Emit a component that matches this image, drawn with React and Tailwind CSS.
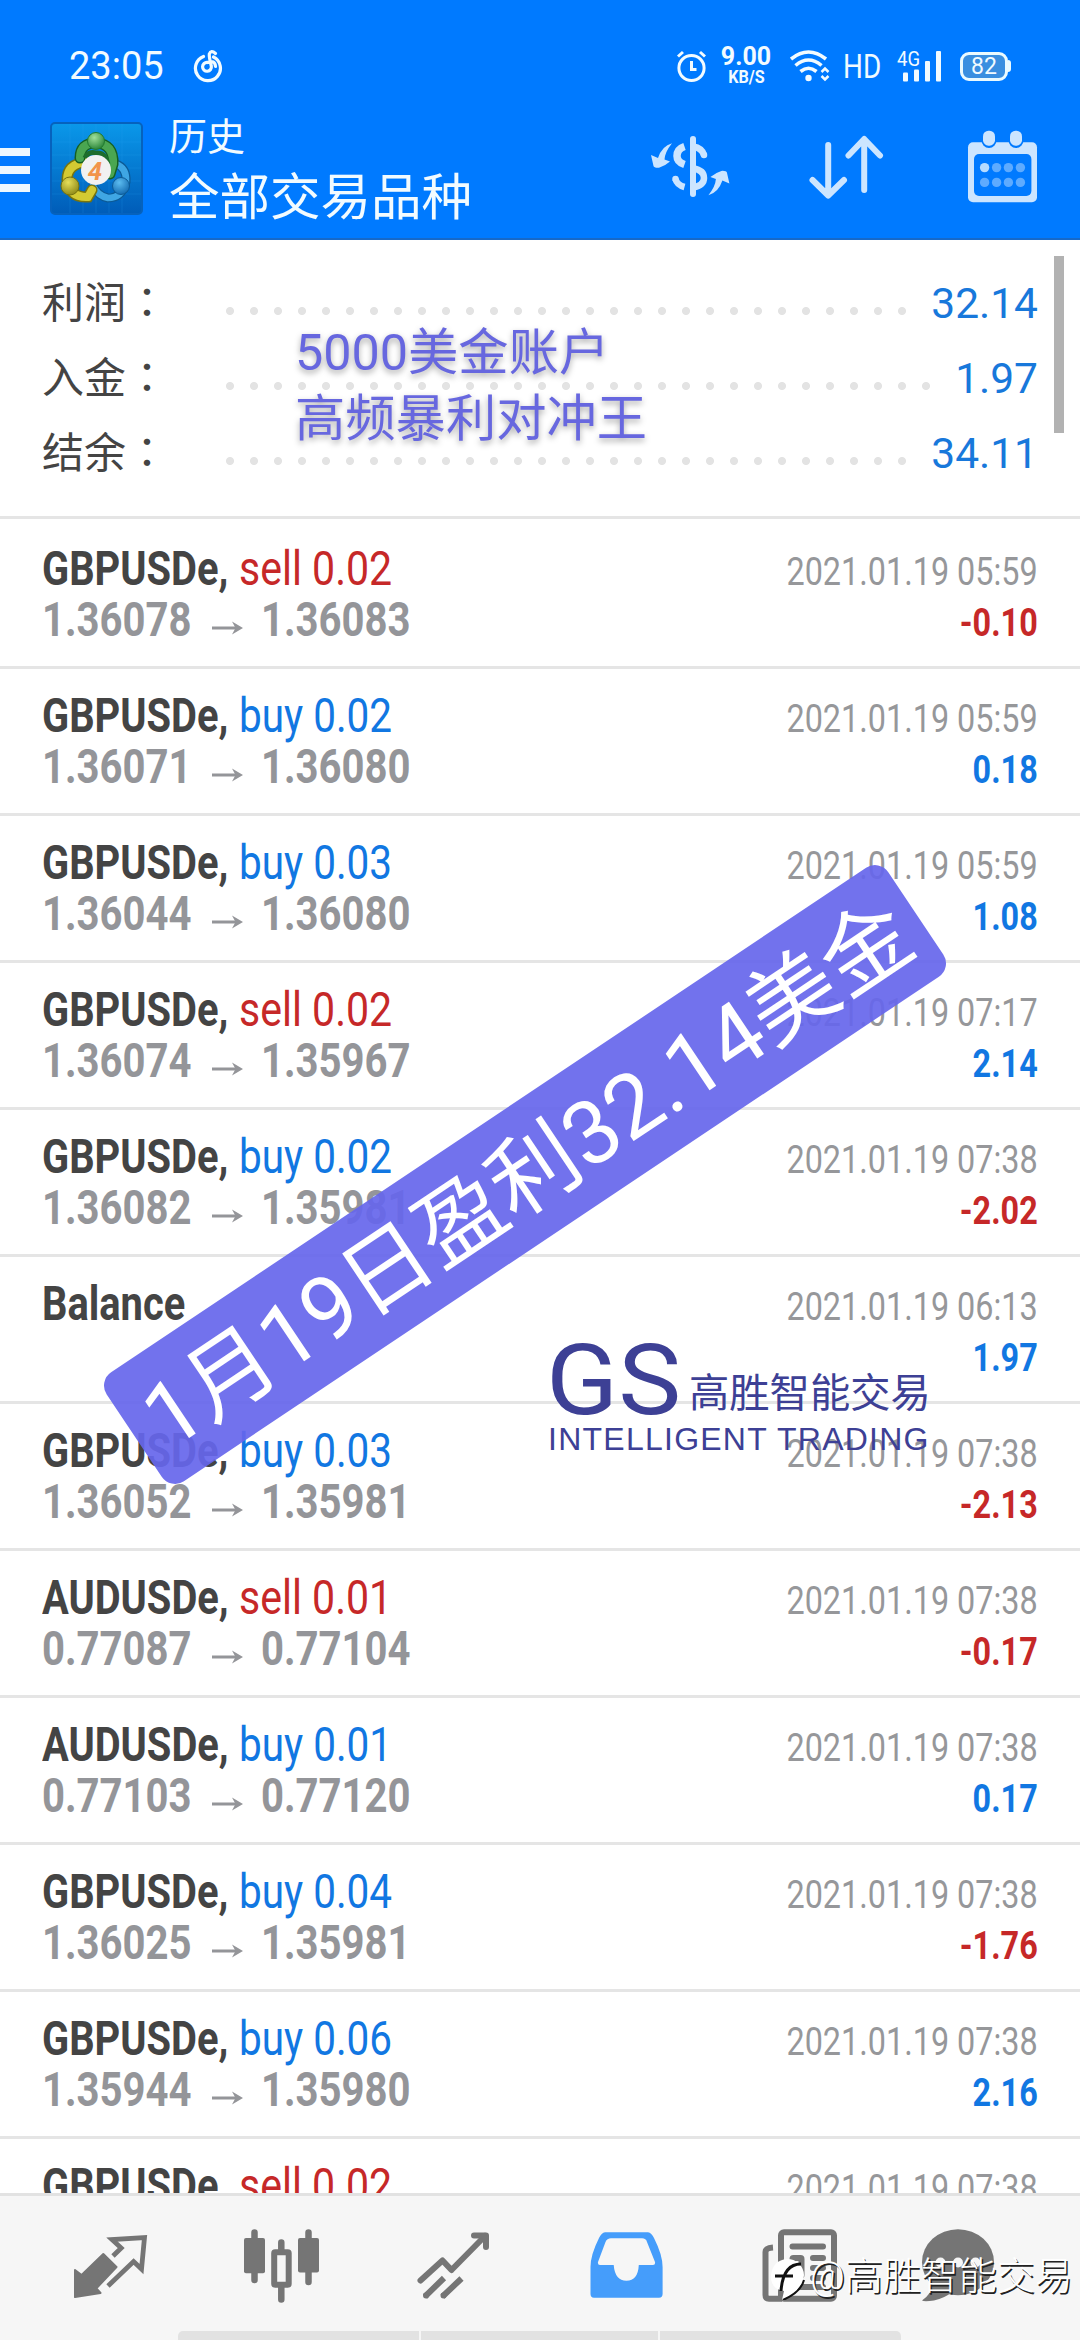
import React from 'react';

const deals = [
  { symbol: 'GBPUSDe', side: 'sell', volume: '0.02', open: '1.36078', close: '1.36083', time: '2021.01.19 05:59', profit: '-0.10' },
  { symbol: 'GBPUSDe', side: 'buy', volume: '0.02', open: '1.36071', close: '1.36080', time: '2021.01.19 05:59', profit: '0.18' },
  { symbol: 'GBPUSDe', side: 'buy', volume: '0.03', open: '1.36044', close: '1.36080', time: '2021.01.19 05:59', profit: '1.08' },
  { symbol: 'GBPUSDe', side: 'sell', volume: '0.02', open: '1.36074', close: '1.35967', time: '2021.01.19 07:17', profit: '2.14' },
  { symbol: 'GBPUSDe', side: 'buy', volume: '0.02', open: '1.36082', close: '1.35981', time: '2021.01.19 07:38', profit: '-2.02' },
  { symbol: 'Balance', time: '2021.01.19 06:13', profit: '1.97' },
  { symbol: 'GBPUSDe', side: 'buy', volume: '0.03', open: '1.36052', close: '1.35981', time: '2021.01.19 07:38', profit: '-2.13' },
  { symbol: 'AUDUSDe', side: 'sell', volume: '0.01', open: '0.77087', close: '0.77104', time: '2021.01.19 07:38', profit: '-0.17' },
  { symbol: 'AUDUSDe', side: 'buy', volume: '0.01', open: '0.77103', close: '0.77120', time: '2021.01.19 07:38', profit: '0.17' },
  { symbol: 'GBPUSDe', side: 'buy', volume: '0.04', open: '1.36025', close: '1.35981', time: '2021.01.19 07:38', profit: '-1.76' },
  { symbol: 'GBPUSDe', side: 'buy', volume: '0.06', open: '1.35944', close: '1.35980', time: '2021.01.19 07:38', profit: '2.16' },
  { symbol: 'GBPUSDe', side: 'sell', volume: '0.02', time: '2021.01.19 07:38' },
];

const summary = [
  { label: '利润', value: '32.14', dots: 'w-[696px]' },
  { label: '入金', value: '1.97', dots: 'w-[720px]' },
  { label: '结余', value: '34.11', dots: 'w-[696px]' },
];

const StatusBar = () => (
  <div className="flex h-[104px] items-center pt-[28px] text-[#f2fbff]">
    <span className="ml-[69px] w-[124px] text-[38px] leading-none">23:05</span>
    <svg width="30" height="34" viewBox="0 0 30 34" fill="none" stroke="currentColor" strokeWidth="3.200" strokeLinecap="round">
      <path d="M10.500 7.500 A12.500 12.500 0 1 0 20.500 8" />
      <path d="M22.500 4.500 Q18 0.500 16.300 5 Q16 8 18.300 17 A4.400 4.400 0 1 1 14.500 13.500 Q22 10.500 22.500 17.500" />
    </svg>
    <svg className="ml-[453px]" width="31" height="34" viewBox="0 0 31 34" fill="none" stroke="currentColor" strokeWidth="3">
      <circle cx="15.500" cy="19" r="12.600" />
      <path d="M15.500 12 V20.500 H20.500 M2 7.500 L7 3 M29 7.500 L24 3" />
    </svg>
    <div className="ml-[13px] flex w-[52px] flex-col items-center font-bold leading-none">
      <span className="text-[25px] leading-[21px]">9.00</span>
      <span className="origin-center scale-x-[0.85] text-[19px] leading-[20px]">KB/S</span>
    </div>
    <svg className="ml-[18px]" width="40" height="32" viewBox="0 0 40 32" fill="none" stroke="currentColor" strokeWidth="3.600">
      <path d="M1 9 Q18.500 -5 36 9 M5.500 15.500 Q18.500 4.500 31.500 15.500 M10.500 21.500 Q18.500 15 26.500 21.500" />
      <circle cx="18.500" cy="28" r="3.200" fill="currentColor" stroke="none" />
      <path d="M31.500 22 L35 18.500 L38.500 22 M31.500 26 L35 29.500 L38.500 26" strokeWidth="2.500" />
    </svg>
    <span className="ml-[13px] w-[38px] origin-left scale-x-[0.82] text-[34px] leading-none">HD</span>
    <svg className="ml-[16px]" width="45" height="32" viewBox="0 0 45 32" fill="currentColor">
      <text x="0" y="15.500" fontSize="20.500" textLength="23" lengthAdjust="spacingAndGlyphs">4G</text>
      <rect x="6" y="22.500" width="5" height="9" rx="1" />
      <rect x="17" y="19.500" width="5" height="12" rx="1" />
      <rect x="28" y="11" width="5" height="20.500" rx="1" />
      <rect x="39" y="1" width="5" height="30.500" rx="1" />
    </svg>
    <div className="ml-[18px] flex h-[29px] w-[48px] items-center justify-center rounded-[9px] border-[3px] border-[#eafaff] bg-[#3a8fe0] text-[23px] leading-none">
      82
    </div>
    <div className="h-[12px] w-[3px] rounded-r bg-[#eafaff]" />
  </div>
);

const AppLogo = () => (
  <svg className="ml-[20px] mt-[18px]" width="93" height="93" viewBox="0 0 93 93">
    <defs>
      <linearGradient id="tile" x1="0" y1="0" x2="0" y2="1">
        <stop offset="0" stopColor="#0a98ea" />
        <stop offset="1" stopColor="#005cb8" />
      </linearGradient>
      <radialGradient id="green" cx="0.4" cy="0.3" r="0.8">
        <stop offset="0" stopColor="#9fe09a" />
        <stop offset="1" stopColor="#1c7a2c" />
      </radialGradient>
      <radialGradient id="yellow" cx="0.4" cy="0.3" r="0.8">
        <stop offset="0" stopColor="#e6df5a" />
        <stop offset="1" stopColor="#858010" />
      </radialGradient>
      <radialGradient id="sky" cx="0.4" cy="0.3" r="0.8">
        <stop offset="0" stopColor="#5cbcf0" />
        <stop offset="1" stopColor="#0b62aa" />
      </radialGradient>
    </defs>
    <rect x="1" y="1" width="91" height="91" rx="4" fill="url(#tile)" stroke="#0662bd" strokeWidth="2" />
    <path d="M20 2V91M33 2V91M46 2V91M59 2V91M72 2V91M2 20H91M2 33H91M2 46H91M2 59H91M2 72H91" stroke="#2aa2ee" strokeOpacity="0.200" />
    {/* three figures round the badge */}
    <path d="M66 42 Q77 46 76 60 Q72 76 58 76 Q48 74 43 64" fill="none" stroke="#0c5a96" strokeWidth="9" strokeLinecap="round" />
    <path d="M66 42 Q77 46 76 60 Q72 76 58 76 Q48 74 43 64" fill="none" stroke="#3fa6e4" strokeWidth="6.500" strokeLinecap="round" />
    <path d="M36 40 Q17 42 17 58 Q20 76 38 75 L42 68" fill="none" stroke="#78740e" strokeWidth="11" strokeLinecap="round" />
    <path d="M36 40 Q17 42 17 58 Q20 76 38 75 L42 68" fill="none" stroke="#d3ca32" strokeWidth="8" strokeLinecap="round" />
    <path d="M30 36 Q30 21 46 21 Q64 22 63 42 L60 52" fill="none" stroke="#155f22" strokeWidth="11" strokeLinecap="round" />
    <path d="M30 36 Q30 21 46 21 Q64 22 63 42 L60 52" fill="none" stroke="#4aa651" strokeWidth="8" strokeLinecap="round" />
    <path d="M35 36 Q38 29 46 31 Q55 30 58 42" fill="none" stroke="#1d6d2c" strokeWidth="5" />
    <circle cx="46" cy="19" r="8.500" fill="url(#green)" stroke="#1f7a30" />
    <circle cx="20" cy="64" r="9" fill="url(#yellow)" stroke="#77730f" />
    <circle cx="71" cy="64" r="8.500" fill="url(#sky)" stroke="#0c5a96" />
    <circle cx="46" cy="48" r="15" fill="#f1f1f1" />
    <text x="45" y="57.500" textAnchor="middle" fontSize="26" fontWeight="700" fontStyle="italic" fill="#f2944a">4</text>
  </svg>
);

const ExchangeIcon = () => (
  <svg className="ml-auto mt-[31px]" width="80" height="64" viewBox="0 0 80 64" fill="none" stroke="currentColor" strokeWidth="6.500">
    <path d="M43 4 V59" strokeLinecap="round" strokeWidth="6" />
    <path d="M34.500 11.500 Q27 14 27 21 Q27 27 34.500 29.500" strokeWidth="7.500" />
    <path d="M25.500 44 Q27 50 34.500 52" />
    <path d="M25.500 44 V44.100 M54 20 V20.100" strokeLinecap="round" />
    <path d="M43 11.500 Q52 13 54 20" />
    <path d="M43 33.500 Q54 35 54 43 Q54 50.500 43 52.500" />
    <g fill="currentColor" stroke="none">
      <path id="swap" d="M1 20 L8 23 Q12 11 22 8.300 Q15 17 14.500 24.500 L20 26.500 Q15 31 9 32.700 Q4 33 3.500 31 Z" />
      <use href="#swap" transform="rotate(180 40.200 34.300)" />
    </g>
  </svg>
);

const SortIcon = () => (
  <svg className="ml-[78px] mt-[30px]" width="76" height="67" viewBox="0 0 76 67" fill="none" stroke="currentColor" strokeWidth="6" strokeLinecap="round" strokeLinejoin="round">
    <path d="M20.200 11 V61 M4.500 46 L20.200 61.500 L36 46" />
    <path d="M56.200 56 V6 M40.500 21.500 L56.200 5 L72 21.500" />
  </svg>
);

const CalendarIcon = () => (
  <svg className="ml-[83px] mr-[41px] mt-[26px]" width="72" height="73" viewBox="0 0 72 73">
    <rect x="1" y="12.300" width="69" height="60" rx="5" fill="currentColor" />
    <rect x="7" y="24" width="57.400" height="42" rx="5" fill="#007aff" />
    <rect x="14.500" y="-1" width="15" height="19" rx="7.500" fill="#007aff" />
    <rect x="41.500" y="-1" width="15" height="19" rx="7.500" fill="#007aff" />
    <rect x="16" y="0.700" width="12" height="15" rx="5.500" fill="currentColor" />
    <rect x="43" y="0.700" width="12" height="15" rx="5.500" fill="currentColor" />
    <circle cx="17.600" cy="37.600" r="4.700" fill="#b5dbff" />
    {[29.6, 41.4, 53.4].map((x) => (
      <circle key={x} cx={x} cy="37.600" r="4.700" fill="#5eabff" />
    ))}
    {[17.6, 29.6, 41.4, 53.4].map((x) => (
      <circle key={x} cx={x} cy="52.400" r="4.700" fill="#5eabff" />
    ))}
  </svg>
);

const Header = () => (
  <header className="h-[240px] border-b-2 border-[#1769c8] bg-[#007aff]">
    <StatusBar />
    <div className="flex items-start text-[#cce5ff]">
      <div className="mt-[44px] flex w-[30px] flex-col gap-[10px]">
        <div className="h-[8px] bg-[#ecf8ff]" />
        <div className="h-[8px] bg-[#ecf8ff]" />
        <div className="h-[8px] bg-[#ecf8ff]" />
      </div>
      <AppLogo />
      <div className="ml-[26px] mt-[9px] whitespace-nowrap text-[#f2fbff]">
        <div className="text-[38px] leading-[48px]">历史</div>
        <div className="mt-[7px] text-[50.500px] leading-[60px]">全部交易品种</div>
      </div>
      <ExchangeIcon />
      <SortIcon />
      <CalendarIcon />
    </div>
  </header>
);

const Summary = () => (
  <section className="relative h-[279px] border-b-[3px] border-[#e5e5e5] pt-[26px]">
    {summary.map((item) => (
      <div key={item.label} className="flex h-[75px] items-center pl-[42px] pr-[42px]">
        <span className="mb-[3px] w-[176px] text-[42px] leading-none text-[#444]">
          {item.label}
          <span className="font-['Noto_Sans_CJK_TC']">：</span>
        </span>
        <span className={`${item.dots} mt-[15px] h-[10px] bg-[radial-gradient(circle,#e3e3e3_3.6px,transparent_4.4px)] bg-[length:24px_10px]`} />
        <span className="ml-auto mt-[2px] text-[42.500px] leading-none text-[#1878db]">{item.value}</span>
      </div>
    ))}
    <div className="absolute right-[16px] top-[16px] h-[177px] w-[10px] bg-[#b2b2b2]" />
    <div className="absolute left-[295px] top-[80px] text-[50.300px] leading-[66px] text-[#6767df] [text-shadow:0_3px_6px_rgba(0,0,0,0.35)]">
      <div>5000美金账户</div>
      <div>高频暴利对冲王</div>
    </div>
  </section>
);

const Deal = ({ deal }) => {
  const sideColor = deal.side === 'sell' ? 'text-[#c62828] scale-x-[0.855]' : 'text-[#1177e2] scale-x-[0.843]';
  const profitColor = deal.profit?.startsWith('-') ? 'text-[#c62828]' : 'text-[#1177e2]';

  return (
    <div className="flex h-[147px] shrink-0 justify-between border-b-[3px] border-[#e5e5e5] px-[42px] whitespace-nowrap">
      <div className="pt-[21px] text-[48px] leading-[51px]">
        <div className="flex">
          <span className="w-[197px] origin-left scale-x-[0.83] font-bold text-[#444]">
            {deal.symbol}{deal.side && ','}
          </span>
          {deal.side && (
            <span className={`origin-left ${sideColor}`}>{deal.side} {deal.volume}</span>
          )}
        </div>
        {deal.open && (
          <div className="flex font-bold text-[#949599]">
            <span className="w-[170px] origin-left scale-x-[0.835]">{deal.open}</span>
            <svg className="mt-[27px]" width="31" height="14" viewBox="0 0 31 14">
              <path d="M0 7 H26" stroke="currentColor" strokeWidth="3" />
              <path d="M20 0.500 L31 7 L20 13.500 L23.500 7 Z" fill="currentColor" />
            </svg>
            <span className="ml-[18px] origin-left scale-x-[0.835]">{deal.close}</span>
          </div>
        )}
      </div>
      <div className="origin-right scale-x-[0.83] pt-[25px] text-right text-[39px] leading-[51px]">
        <div className="text-[#96979a]">{deal.time}</div>
        <div className={`font-bold ${profitColor}`}>{deal.profit}</div>
      </div>
    </div>
  );
};

const ICON = 'h-[80px] w-[80px]';

const NavBar = () => (
  <nav className="relative grid h-[147px] grid-cols-6 justify-items-center border-t-[3px] border-[#e2e2e2] bg-[#f6f6f6] px-6 pt-[29px] text-[#757575]">
    <svg className={ICON} viewBox="0 0 80 80">
      <path d="M5 45 L11.600 50 L33.300 29 L46.500 42 L26.400 63.300 L30.500 68 L5 72 Z" fill="currentColor" stroke="currentColor" strokeWidth="2" strokeLinejoin="round" />
      <path d="M43 31 L51.200 23 L42 14.500 L74.500 12.500 L71.500 44 L63.600 36.500 L38 61" fill="none" stroke="currentColor" strokeWidth="4.800" />
    </svg>
    <svg className={ICON} viewBox="0 0 80 80" fill="none" stroke="currentColor" strokeWidth="6.500" strokeLinecap="round">
      <path d="M12.500 7.500 V55 M66.500 7.500 V57 M39.300 17.500 V26 M39.300 62 V74.500" />
      <rect x="2" y="13" width="21" height="35.300" rx="2" fill="currentColor" stroke="none" />
      <rect x="56" y="13" width="21" height="34.500" rx="2" fill="currentColor" stroke="none" />
      <rect x="32.200" y="27.300" width="14.500" height="32.500" rx="1" fill="#f6f6f6" strokeWidth="6" />
    </svg>
    <svg className={ICON} viewBox="0 0 80 80" fill="none" stroke="currentColor" strokeWidth="6">
      <path d="M6.500 55.500 L28.500 35.500 L37.500 45 L71 11" strokeLinejoin="round" strokeLinecap="round" />
      <path d="M60 10.500 H72 V22" strokeLinecap="round" strokeLinejoin="round" />
      <path d="M11 71.500 L30 53 M28.500 71.500 L47.500 53.500" />
      <path d="M12 70.500 V70.600 M29.500 70.500 V70.600" strokeLinecap="round" />
    </svg>
    <svg className={ICON} viewBox="0 0 80 80" fill="#459dfb" fillRule="evenodd">
      <path d="M19 7.300 H62 Q65.500 8 68 13 Q76.600 30 76.600 42 V69 Q76.600 72.700 73 72.700 H8 Q4.500 72.700 4.500 69 V42 Q4.500 30 13 13 Q15.500 8 19 7.300 Z M25 13.300 Q21 13.300 19.500 17 L12 37 Q11.500 40 14 40 H27.700 Q29 55.700 40.400 55.700 Q52 55.700 52.800 40 H67 Q69.500 40 69 37 L61 17 Q60 13.300 56 13.300 Z" />
    </svg>
    <svg className={ICON} viewBox="0 0 80 80" fill="none" stroke="currentColor" strokeWidth="6">
      <rect x="23" y="7.300" width="53" height="66.500" rx="3" />
      <path d="M24 73.700 H11 Q7.500 73.700 7.500 70 V27 Q7.500 23 15 22.500" />
      <path d="M34.500 21.500 H65 M55 33 H65 M55 43 H65 M55 53 H65 M34.500 62 H65" strokeLinecap="round" />
      <rect x="34.500" y="33" width="9" height="18" rx="1" />
    </svg>
    <svg className={`${ICON} -ml-6`} viewBox="0 0 80 80" fill="currentColor">
      <ellipse cx="40" cy="37.200" rx="36" ry="33" />
      <path d="M14 58 Q14 69 4 75.500 Q6 77 16 75.500 Q27 73 34 67 Z" />
      <g fill="#f6f6f6">
        <circle cx="22.500" cy="37.500" r="5" />
        <circle cx="40" cy="37.500" r="5" />
        <circle cx="57.500" cy="37.500" r="5" />
      </g>
    </svg>
    {/* system home strip */}
    <div className="absolute bottom-0 left-[178px] flex h-[9px] w-[723px] gap-[2px] overflow-hidden rounded-t-[5px]">
      <div className="w-[241px] bg-[#e2e2e2]" />
      <div className="w-[237px] bg-[#e2e2e2]" />
      <div className="flex-1 bg-[#e2e2e2]" />
    </div>
    {/* author mark */}
    <div className="absolute left-[768px] top-[56px] flex items-center whitespace-nowrap text-[38px] leading-[48px] font-light text-white [text-shadow:1.5px_1.5px_0_#222]">
      <svg width="42" height="48" viewBox="0 0 42 48">
        <path d="M19 7 A16.500 16.500 0 0 1 36 23 Q35 38 14 48 L16 39 Q2 37 3 23 Q5 8 19 7 Z" fill="#fff" />
        <path d="M7 24 H25 M13 39 Q15 12 33 12" fill="none" stroke="#111" strokeWidth="3" />
        <path d="M36 28 Q33 40 15 48" fill="none" stroke="#111" strokeWidth="2" />
      </svg>
      <span>@高胜智能交易</span>
    </div>
  </nav>
);

const App = () => {
  return (
    <div className="relative flex h-[2340px] w-[1080px] flex-col overflow-hidden bg-white font-[Roboto,'Noto_Sans_CJK_SC',sans-serif]">
      <Header />
      <Summary />
      <div className="flex h-[1674px] flex-col overflow-hidden pt-[3px]">
        {deals.map((deal, i) => (
          <Deal key={i} deal={deal} />
        ))}
      </div>
      <NavBar />

      <div className="absolute left-[55px] top-[1109px] flex h-[131px] w-[940px] -rotate-[33.75deg] items-center justify-center whitespace-nowrap rounded-[16px] bg-[#6666ec]/92 pl-[4px] pt-[6px] text-[88.500px] leading-none text-white">
        1月19日盈利32.14美金
      </div>

      <div className="absolute left-[546px] top-[1330px] whitespace-nowrap text-[#3d4095]">
        <div className="flex h-[92px] items-end">
          <span className="mb-[-4px] w-[143px] origin-left scale-x-[1.07] text-[99px] leading-[92px]">GS</span>
          <span className="text-[40.300px] leading-[56px]">高胜智能交易</span>
        </div>
        <div className="ml-[2px] font-['Liberation_Sans'] text-[32px] leading-[34px] tracking-[1.250px]">INTELLIGENT TRADING</div>
      </div>
    </div>
  );
};

export default App;
